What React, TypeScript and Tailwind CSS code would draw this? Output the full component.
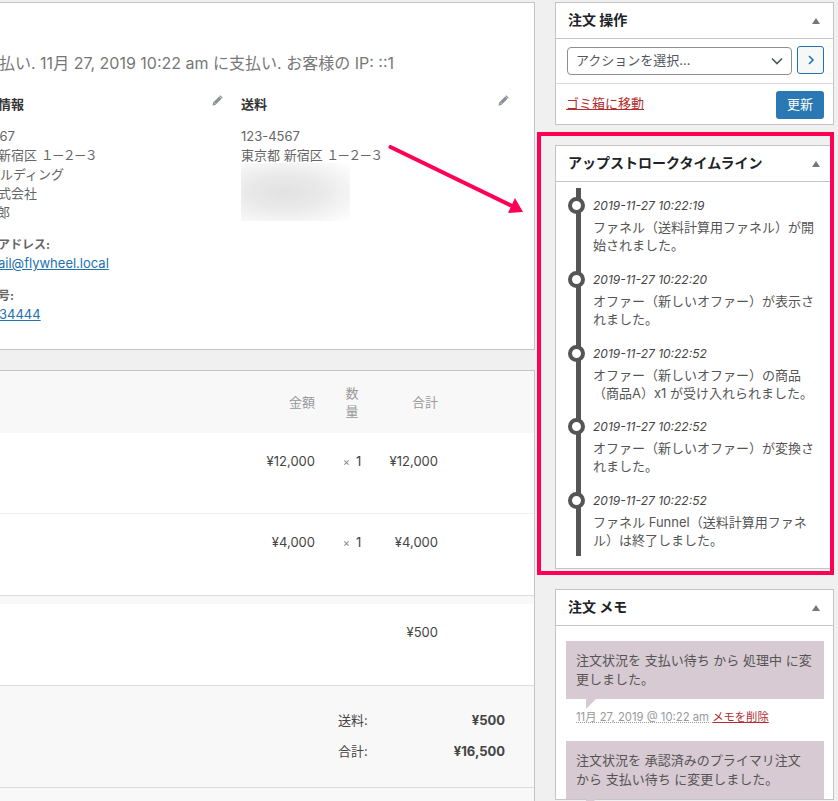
const font = "font-['Inter','Noto_Sans_CJK_JP',sans-serif]";

function Pencil({ className }: { className: string }) {
  return (
    <svg viewBox="0 0 12 12" className={className} fill="#8c8f94">
      <path d="M8.6 1.2 10.8 3.4 4.2 10 1.4 10.8 2 7.8Z" />
      <path d="M3 8 4 9" stroke="#fff" strokeWidth="0.7" />
      <path d="M7.6 2.2 9.8 4.4" stroke="#fff" strokeWidth="0.7" />
    </svg>
  );
}

function CardHeader({ title }: { title: string }) {
  return (
    <div className="flex h-[36px] items-center justify-between border-b border-[#c3c4c7] pb-[2px] pl-[12px] pr-[13px]">
      <h2 className="text-[14px] font-bold text-[#1d2327]">{title}</h2>
      <div className="mt-[2px] h-0 w-0 border-x-[4px] border-b-[6px] border-x-transparent border-b-[#72777c]" />
    </div>
  );
}

const timeline = [
  ["2019-11-27 10:22:19", "ファネル（送料計算用ファネル）が開始されました。"],
  ["2019-11-27 10:22:20", "オファー（新しいオファー）が表示されました。"],
  ["2019-11-27 10:22:52", "オファー（新しいオファー）の商品（商品A）x1 が受け入れられました。"],
  ["2019-11-27 10:22:52", "オファー（新しいオファー）が変換されました。"],
  ["2019-11-27 10:22:52", "ファネル Funnel（送料計算用ファネル）は終了しました。"],
];

function Row({ price, total, last }: { price: string; total: string; last?: boolean }) {
  return (
    <div className={last ? "flex h-[82px] justify-end border-b border-[#dcdcde] bg-white pr-[96px] pt-[19px] text-[13px] leading-[19px] text-[#444]" : "flex h-[81px] justify-end border-b border-[#f0f0f1] bg-white pr-[96px] pt-[19px] text-[13px] leading-[19px] text-[#444]"}>
      <div className="w-[80px] text-right">{price}</div>
      <div className="ml-[17px] w-[40px] text-center">
        <span className="text-[11px] text-[#888]">×</span>
        <span className="ml-[6px]">1</span>
      </div>
      <div className="w-[66px] text-right">{total}</div>
    </div>
  );
}

export default function App() {
  return (
    <div className={`relative flex h-[801px] w-[838px] items-start overflow-hidden bg-[#f0f0f1] pt-[2px] ${font}`}>
      <main className="flex w-[535px] shrink-0 flex-col gap-[20px]">
        <section className="h-[348px] overflow-hidden border border-l-0 border-[#c3c4c7] bg-white">
          <p className="-ml-[1px] mt-[49px] whitespace-nowrap text-[16px] leading-[22px] text-[#777]">
            払い. 11月 27, 2019 10:22 am に支払い. お客様の IP: ::1
          </p>
          <div className="mt-[20px] flex">
            <div className="relative w-[241px] shrink-0">
              <h3 className="-ml-[2px] text-[13px] font-bold leading-[20px] text-[#333]">情報</h3>
              <Pencil className="absolute left-[211px] top-0 h-[13px] w-[13px]" />
              <div className="mt-[13px] text-[13px] leading-[19px] text-[#666]">
                <p className="-ml-[44px] whitespace-nowrap">123-4567</p>
                <p className="-ml-[2px] whitespace-nowrap">新宿区 <span className="tracking-[-2px]">１－２－３</span></p>
                <p className="whitespace-nowrap">ルディング</p>
                <p className="-ml-[2px] whitespace-nowrap">式会社</p>
                <p className="-ml-[3px] whitespace-nowrap">郎</p>
              </div>
              <p className="-ml-[2px] mt-[13px] text-[12px] font-bold leading-[19px] text-[#666]">アドレス:</p>
              <a className="-ml-[2px] block whitespace-nowrap text-[13px] leading-[19px] text-[#2271b1] underline">ail@flywheel.local</a>
              <p className="-ml-[2px] mt-[13px] text-[12px] font-bold leading-[19px] text-[#666]">号:</p>
              <a className="-ml-[1px] block whitespace-nowrap text-[13px] leading-[19px] text-[#2271b1] underline">34444</a>
            </div>
            <div className="relative flex-1">
              <h3 className="text-[13px] font-bold leading-[20px] text-[#333]">送料</h3>
              <Pencil className="absolute left-[256px] top-0 h-[13px] w-[13px]" />
              <div className="mt-[13px] text-[13px] leading-[19px] text-[#666]">
                <p>123-4567</p>
                <p>東京都 新宿区 <span className="tracking-[-2px]">１－２－３</span></p>
              </div>
              <div className="-mt-[2px] h-[58px] w-[109px] bg-[radial-gradient(ellipse_at_40%_50%,#e2e2e2_0%,#e9e9e9_40%,#f4f4f4_70%,#ffffff_100%)]" />
            </div>
          </div>
        </section>

        <section className="border-y border-r border-[#c3c4c7] bg-[#f8f8f8]">
          <div className="flex h-[62px] items-center justify-end pr-[96px] text-[13px] leading-[18px] text-[#999]">
            <div className="w-[80px] text-right">金額</div>
            <div className="ml-[17px] w-[40px] text-center">
              <div className="mx-auto w-[13px]">数量</div>
            </div>
            <div className="w-[66px] text-right">合計</div>
          </div>
          <Row price="¥12,000" total="¥12,000" />
          <Row price="¥4,000" total="¥4,000" last />
          <div className="h-[8px]" />
          <div className="flex h-[82px] justify-end border-b border-[#dcdcde] bg-white pr-[96px] pt-[19px] text-[13px] leading-[19px] text-[#444]">
            <div className="text-right">¥500</div>
          </div>
          <div className="h-[102px] border-b border-[#dcdcde] pl-[338px] pr-[29px] pt-[25px] text-[13px] leading-[19px] text-[#444]">
            <div className="flex justify-between">
              <span>送料:</span>
              <b className="font-bold">¥500</b>
            </div>
            <div className="mt-[12px] flex justify-between">
              <span>合計:</span>
              <b className="font-bold">¥16,500</b>
            </div>
          </div>
          <div className="h-[40px]" />
        </section>
      </main>

      <aside className="ml-[20px] flex w-[279px] shrink-0 flex-col gap-[20px]">
        <section className="h-[123px] border border-[#c3c4c7] bg-white">
          <CardHeader title="注文 操作" />
          <div className="flex h-[45px] items-start gap-[5px] border-b border-[#dcdcde] pl-[11px] pt-[8px]">
            <div className="flex h-[28px] w-[225px] items-center justify-between rounded-[4px] border border-[#8c8f94] bg-white pl-[8px] pr-[8px] text-[13px] text-[#50575e]">
              <span>アクションを選択...</span>
              <svg viewBox="0 0 12 8" className="h-[8px] w-[12px]" fill="none" stroke="#50575e" strokeWidth="1.6"><path d="M1 1.5 6 6.5 11 1.5" /></svg>
            </div>
            <div className="-mt-[1px] flex h-[28px] w-[27px] items-center justify-center rounded-[3px] border border-[#2271b1] bg-[#f6f7f7]">
              <svg viewBox="0 0 8 10" className="h-[10px] w-[8px]" fill="none" stroke="#2271b1" strokeWidth="1.6"><path d="M2 1 6 5 2 9" /></svg>
            </div>
          </div>
          <div className="flex items-start justify-between pl-[10px] pr-[9px] pt-[7px]">
            <a className="mt-[3px] text-[13px] leading-[18px] text-[#b32d2e] underline">ゴミ箱に移動</a>
            <div className="flex h-[28px] w-[48px] items-center justify-center rounded-[3px] bg-[#2a78b4] text-[13px] text-white">更新</div>
          </div>
        </section>

        <section className="h-[424px] border border-[#c3c4c7] bg-white">
          <CardHeader title="アップストロークタイムライン" />
          <div className="relative ml-[20px] mt-[6px] h-[368px]">
            <div className="absolute left-0 top-0 h-full w-[5px] bg-[#555]" />
            <div className="flex flex-col pl-[17px] pt-[9px]">
              {timeline.map(([date, text], i) => (
                <div key={i} className="relative h-[73.75px]">
                  <div className="absolute -left-[25px] top-0 h-[17px] w-[17px] rounded-full border-[4px] border-[#555] bg-white" />
                  <p className="text-[12px] italic leading-[18px] text-[#444]">{date}</p>
                  <p className="mt-[3px] w-[230px] text-[13px] leading-[18px] text-[#555]">{text}</p>
                </div>
              ))}
            </div>
          </div>
        </section>

        <section className="border border-[#c3c4c7] bg-white">
          <CardHeader title="注文 メモ" />
          <div className="flex flex-col gap-[15px] pl-[10px] pr-[9px] pt-[15px]">
            <div>
              <div className="relative bg-[#d7cad2] p-[10px] text-[13px] leading-[19px] text-[#555]">
                注文状況を 支払い待ち から 処理中 に変更しました。
                <div className="absolute left-[20px] top-full h-0 w-0 border-r-[10px] border-t-[10px] border-r-transparent border-t-[#d7cad2]" />
              </div>
              <p className="mt-[9px] pl-[10px] text-[11.3px] leading-[18px] text-[#999]">
                <span className="underline decoration-dotted">11月 27, 2019 @ 10:22 am</span>{" "}
                <a className="text-[#b32d2e] underline">メモを削除</a>
              </p>
            </div>
            <div className="relative bg-[#d7cad2] p-[10px] text-[13px] leading-[19px] text-[#555]">
              注文状況を 承認済みのプライマリ注文<br />から 支払い待ち に変更しました。
              <div className="absolute left-[20px] top-full h-0 w-0 border-r-[10px] border-t-[10px] border-r-transparent border-t-[#d7cad2]" />
            </div>
          </div>
        </section>
      </aside>

      <div className="pointer-events-none absolute left-[537px] top-[132px] h-[443px] w-[297px] border-[4px] border-[#ff0055]" />
      <svg className="pointer-events-none absolute left-[385px] top-[140px] h-[80px] w-[145px]" viewBox="0 0 145 80">
        <path d="M5.5 7 128 66.5" stroke="#ff0055" strokeWidth="4" strokeLinecap="round" />
        <path d="M138 72 130 58 123 73Z" fill="#ff0055" />
      </svg>
    </div>
  );
}
